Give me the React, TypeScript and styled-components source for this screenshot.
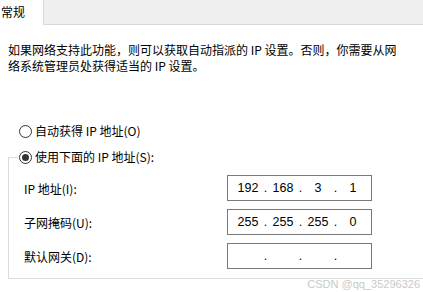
import styled, { createGlobalStyle } from 'styled-components';

const GlobalStyle = createGlobalStyle`
  html, body {
    margin: 0;
    padding: 0;
    background: #fff;
  }
`;

const Window = styled.div`
  position: relative;
  width: 423px;
  height: 292px;
  overflow: hidden;
  background: #fff;
  color: #000;
  font-family: "Noto Sans CJK SC", "Noto Sans", sans-serif;
  font-size: 12px;
`;

const TabBar = styled.div`
  display: flex;
  height: 24px;
  background: #f0f0f0;
  border-bottom: 1px solid #d9d9d9;
`;

const Tab = styled.div`
  width: 42px;
  height: 25px;
  margin-bottom: -1px;
  padding-left: 1px;
  background: #fff;
  border-right: 1px solid #d9d9d9;
  line-height: 24px;
  white-space: nowrap;
`;

const Content = styled.div`
  padding: 17px 0 0 8px;
`;

const Description = styled.p`
  margin: 0;
  line-height: 16px;
  white-space: nowrap;
`;

const RadioRow = styled.div<{ $top: number }>`
  display: flex;
  align-items: center;
  height: 16px;
  margin-top: ${({ $top }) => $top}px;
  padding-left: ${({ $top }) => ($top > 20 ? 11 : 0)}px;
`;

const Tick = styled.span`
  align-self: flex-end;
  width: 10px;
  height: 8px;
  border-top: 1px solid #dcdcdc;
  border-left: 1px solid #dcdcdc;
  box-sizing: border-box;
  margin-right: 1px;
`;

const RadioCircle = styled.span<{ $checked?: boolean }>`
  position: relative;
  flex: none;
  box-sizing: border-box;
  width: 13px;
  height: 13px;
  border: 1px solid #333;
  border-radius: 50%;
  background: #fff;

  &::after {
    content: '';
    display: ${({ $checked }) => ($checked ? 'block' : 'none')};
    position: absolute;
    left: 2px;
    top: 2px;
    width: 7px;
    height: 7px;
    border-radius: 50%;
    background: #333;
  }
`;

const RadioLabel = styled.span`
  margin-left: 3px;
  line-height: 16px;
  white-space: nowrap;
`;

const GroupBody = styled.div`
  display: flex;
  flex-direction: column;
  gap: 8px;
  padding: 10px 0 9px 15px;
  border-left: 1px solid #dcdcdc;
  border-bottom: 1px solid #dcdcdc;
`;

const FieldRow = styled.div`
  display: flex;
  align-items: center;
  height: 26px;
`;

const FieldLabel = styled.span`
  width: 203px;
  white-space: nowrap;
`;

const IpBox = styled.div`
  display: flex;
  align-items: center;
  box-sizing: border-box;
  width: 145px;
  height: 26px;
  padding-left: 6px;
  border: 1px solid #7a7a7a;
  background: #fff;
  font-family: "Liberation Sans", Arial, sans-serif;
  font-size: 12.5px;
`;

const Octet = styled.span`
  width: 28px;
  text-align: center;
`;

const Dot = styled.span`
  width: 7px;
  text-align: center;
`;

const Watermark = styled.span`
  position: absolute;
  right: 3px;
  bottom: 2px;
  color: #c9c9c9;
  font-family: "Liberation Sans", Arial, sans-serif;
  font-size: 11px;
  white-space: nowrap;
`;

const fields = [
  { label: 'IP 地址(I):', value: ['192', '168', '3', '1'] },
  { label: '子网掩码(U):', value: ['255', '255', '255', '0'] },
  { label: '默认网关(D):', value: ['', '', '', ''] },
];

function IpField({ parts }: { parts: string[] }) {
  return (
    <IpBox>
      {parts.map((p, i) => (
        <span key={i} style={{ display: 'contents' }}>
          <Octet>{p}</Octet>
          {i < parts.length - 1 && <Dot>.</Dot>}
        </span>
      ))}
    </IpBox>
  );
}

export default function App() {
  return (
    <>
      <GlobalStyle />
      <Window>
        <TabBar>
          <Tab>常规</Tab>
        </TabBar>
        <Content>
          <Description>
            如果网络支持此功能，则可以获取自动指派的 IP 设置。否则，你需要从网
            <br />
            络系统管理员处获得适当的 IP 设置。
          </Description>

          <RadioRow $top={49}>
            <RadioCircle />
            <RadioLabel>自动获得 IP 地址(O)</RadioLabel>
          </RadioRow>

          <RadioRow $top={10}>
            <Tick />
            <RadioCircle $checked />
            <RadioLabel>使用下面的 IP 地址(S):</RadioLabel>
          </RadioRow>

          <GroupBody>
            {fields.map((f) => (
              <FieldRow key={f.label}>
                <FieldLabel>{f.label}</FieldLabel>
                <IpField parts={f.value} />
              </FieldRow>
            ))}
          </GroupBody>
        </Content>
        <Watermark>CSDN @qq_35296326</Watermark>
      </Window>
    </>
  );
}
